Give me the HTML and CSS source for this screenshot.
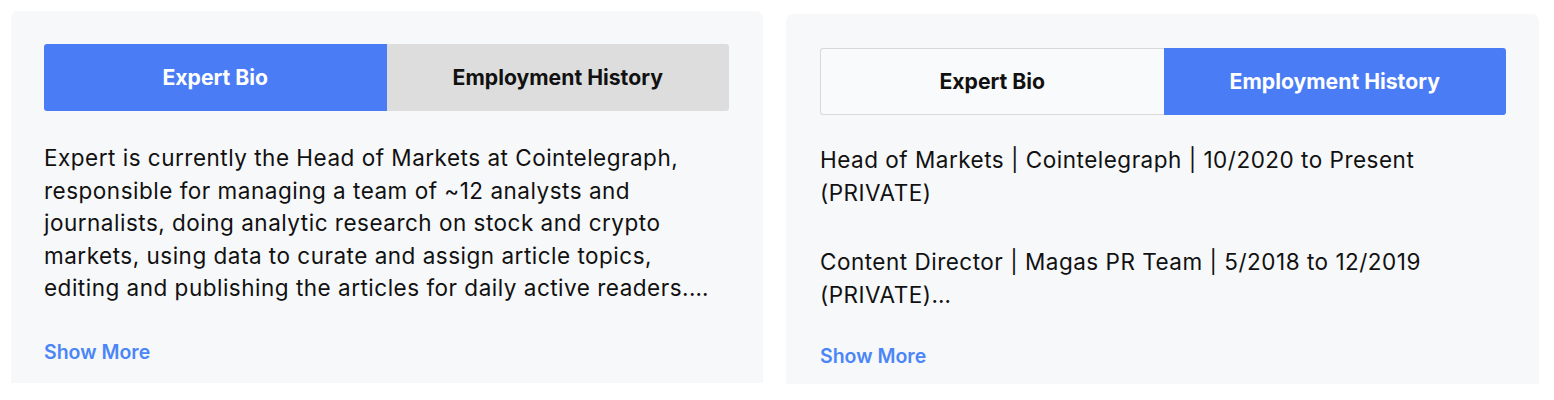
FILE: index.html
```html
<!DOCTYPE html>
<html>
<head>
<meta charset="utf-8">
<link rel="stylesheet" href="styles.css">
</head>
<body>
<div class="page">
  <section class="card card-left">
    <div class="tabs">
      <div class="tab tab-active">Expert Bio</div>
      <div class="tab tab-grey">Employment History</div>
    </div>
    <div class="body">
      <p class="bio">Expert is currently the Head of Markets at Cointelegraph, responsible for managing a team of ~12 analysts and journalists, doing analytic research on stock and crypto markets, using data to curate and assign article topics, editing and publishing the articles for daily active readers.…</p>
    </div>
    <a class="more">Show More</a>
  </section>
  <section class="card card-right">
    <div class="tabs">
      <div class="tab tab-outline">Expert Bio</div>
      <div class="tab tab-active">Employment History</div>
    </div>
    <div class="body body-right">
      <p class="job">Head of Markets | Cointelegraph | 10/2020 to Present (PRIVATE)</p>
      <p class="job">Content Director | Magas PR Team | 5/2018 to 12/2019 (PRIVATE)…</p>
    </div>
    <a class="more more-right">Show More</a>
  </section>
</div>
</body>
</html>
```

FILE: styles.css
```css
html, body {
  margin: 0;
  padding: 0;
  background: #ffffff;
}
.page {
  display: flex;
  align-items: flex-start;
  gap: 23px;
  padding: 11px 0 0 11px;
}
.card {
  box-sizing: border-box;
  background: #f7f8fa;
  border-radius: 7px 7px 0 0;
  padding: 33px 34px 0 33px;
  display: flex;
  flex-direction: column;
}
.card-left {
  width: 752px;
  height: 372px;
}
.card-right {
  width: 753px;
  height: 370px;
  margin-top: 3px;
  padding: 34px 33px 0 34px;
}
.tabs {
  display: flex;
  height: 67px;
}
.tab {
  flex: 1 1 0;
  display: flex;
  align-items: center;
  justify-content: center;
  padding-bottom: 1px;
  font-family: "Inter", "Lato", sans-serif;
  font-weight: 700;
  font-size: 21.2px;
  box-sizing: border-box;
}
.tab:first-child {
  border-radius: 3px 0 0 3px;
}
.tab:last-child {
  border-radius: 0 3px 3px 0;
}
.tab-active {
  background: #4a7cf6;
  color: #ffffff;
}
.tab-grey {
  background: #dddddd;
  color: #111111;
}
.tab-outline {
  background: #f9fafb;
  border: 1px solid #d9d9d9;
  border-right: none;
  color: #111111;
}
.body {
  margin-top: 31px;
  font-family: "Inter", "Roboto", sans-serif;
  font-size: 22.5px;
  letter-spacing: 0.5px;
  line-height: 32.5px;
  color: #111111;
}
.body p {
  margin: 0;
}
.body-right {
  margin-top: 29px;
}
.job + .job {
  margin-top: 37px;
}
.more {
  margin-top: 35px;
  font-family: "Inter", "Lato", sans-serif;
  font-weight: 600;
  font-size: 19.5px;
  color: #4a86f7;
}
.more-right {
  margin-top: 33px;
}
```
